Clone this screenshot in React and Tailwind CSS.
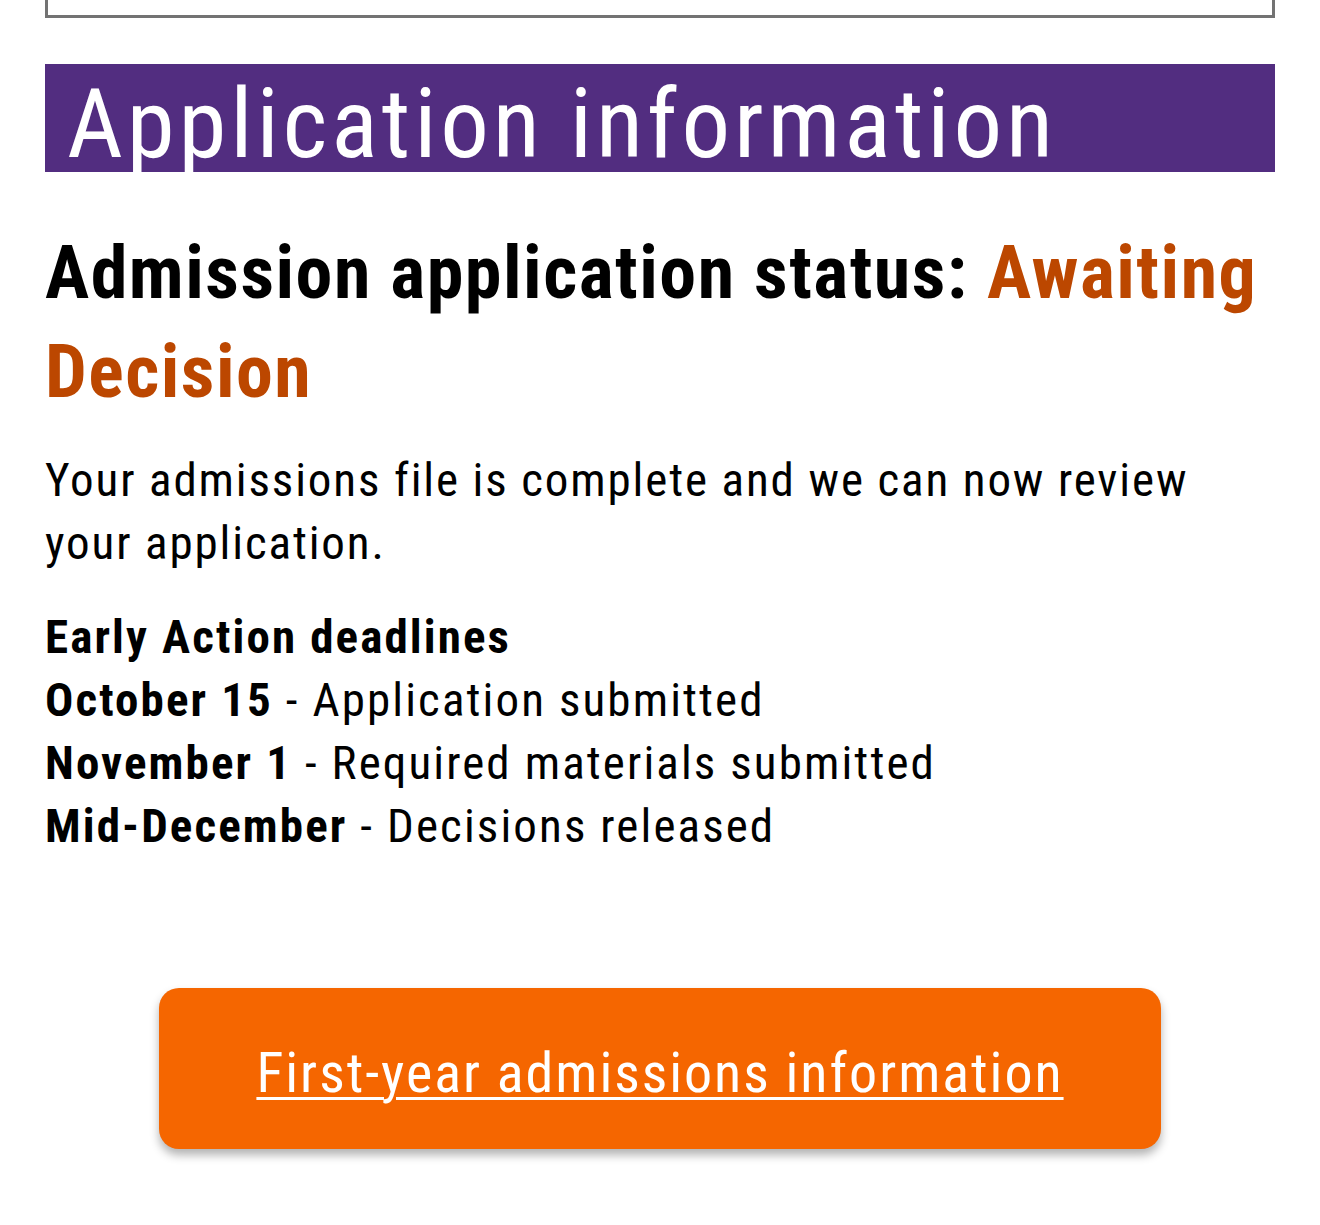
export default function App() {
  return (
    <div className="min-h-[1225px] bg-white [font-family:'Roboto_Condensed','Roboto',sans-serif] text-black">
      <div className="mx-[45px]">
        <div className="h-[18px] border-[3px] border-t-0 border-[#737373]" />

        <div className="mt-[46px] h-[108px] overflow-hidden bg-[#522d80] pl-[22px] pt-[6px]">
          <h1 className="text-[97px] leading-[108px] tracking-[0.04em] text-white">Application information</h1>
        </div>

        <h2 className="mt-[51px] text-[74px] leading-[99px] font-bold tracking-[0.02em]">
          Admission application status:{" "}
          <span className="text-[#bc4700]">Awaiting Decision</span>
        </h2>

        <p className="mt-[27px] text-[47px] leading-[63px] tracking-[0.04em]">
          Your admissions file is complete and we can now review your application.
        </p>

        <div className="mt-[31px] text-[47px] leading-[63px] tracking-[0.045em]">
          <div className="font-bold">Early Action deadlines</div>
          <div>
            <span className="font-bold">October 15</span> - Application submitted
          </div>
          <div>
            <span className="font-bold">November 1</span> - Required materials submitted
          </div>
          <div>
            <span className="font-bold">Mid-December</span> - Decisions released
          </div>
        </div>

        <div className="mt-[131px] flex justify-center">
          <a
            href="#"
            className="flex h-[161px] w-[1002px] items-center justify-center rounded-[20px] bg-[#f56600] pt-[8px] text-[56px] tracking-[0.035em] text-white underline decoration-[3px] underline-offset-[5px] shadow-[0_6px_10px_rgba(0,0,0,0.3)]"
          >
            First-year admissions information
          </a>
        </div>
      </div>
    </div>
  );
}
